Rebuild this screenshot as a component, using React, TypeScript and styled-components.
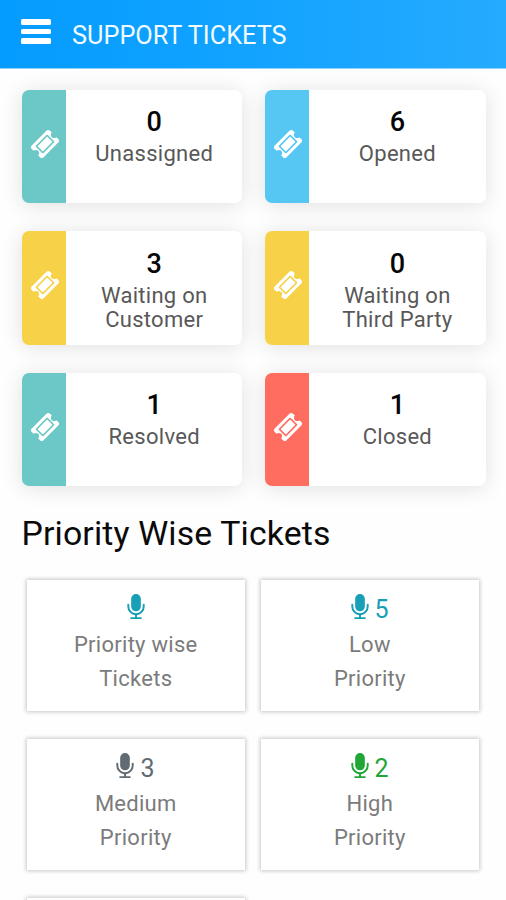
import React from "react";
import styled, { createGlobalStyle } from "styled-components";

const GlobalStyle = createGlobalStyle`
  * { box-sizing: border-box; }
  html, body { margin: 0; padding: 0; background: #fff; overflow: hidden; }
  body { font-family: Roboto, "Liberation Sans", sans-serif; }
`;

const Screen = styled.div`
  width: 506px;
  height: 900px;
  overflow: hidden;
  background: #fefefe;
`;

const Header = styled.header`
  display: flex;
  align-items: flex-start;
  height: 68px;
  padding: 19px 21px 0;
  background: linear-gradient(90deg, #049cff 0%, #13a3ff 50%, #25abff 100%);
  box-shadow: 0 1px 0 #8fd0fa;
`;

const MenuButton = styled.button`
  display: flex;
  flex-direction: column;
  gap: 4px;
  width: 30px;
  margin: 0;
  padding: 0;
  border: 0;
  background: none;
`;

const MenuBar = styled.span`
  height: 5.6px;
  border-radius: 1.5px;
  background: #fff;
`;

const Title = styled.h1`
  margin: 2px 0 0 21px;
  color: #f2fbff;
  font-size: 25.3px;
  line-height: 30px;
  font-weight: 400;
  letter-spacing: 0;
`;

const StatusGrid = styled.section`
  display: grid;
  grid-template-columns: 220.4px 220.4px;
  grid-auto-rows: 113.2px;
  gap: 28.3px 22.8px;
  padding: 22px 0 0 22px;
`;

const StatusCard = styled.article`
  display: flex;
  overflow: hidden;
  border-radius: 7px;
  background: #fff;
  box-shadow: 0 2px 21px rgba(0, 0, 0, 0.12);
`;

const StatusStrip = styled.div<{ $color: string }>`
  display: flex;
  align-items: center;
  justify-content: center;
  width: 44px;
  padding-left: 1px;
  padding-bottom: 6px;
  background: ${({ $color }) => $color};
`;

const StatusBody = styled.div`
  flex: 1;
  padding-top: 16.4px;
  text-align: center;
`;

const StatusCount = styled.div`
  color: #050505;
  font-size: 27px;
  line-height: 32px;
  font-weight: 500;
`;

const StatusLabel = styled.div`
  margin-top: 4px;
  color: #585858;
  font-size: 22px;
  line-height: 24.6px;
  letter-spacing: 0.28px;
  white-space: pre-line;
`;

const SectionTitle = styled.h2`
  margin: 27px 0 0 21.5px;
  color: #0a0a0a;
  font-size: 33.8px;
  line-height: 42px;
  font-weight: 400;
  letter-spacing: 0.15px;
`;

const PriorityGrid = styled.section`
  display: grid;
  grid-template-columns: 218.5px 218.5px;
  grid-auto-rows: 131.6px;
  gap: 27.4px 15.6px;
  padding: 24.7px 0 0 26.5px;
`;

const PriorityCard = styled.article`
  padding-top: 12px;
  background: #fff;
  box-shadow: 0 0 4px 1px rgba(0, 0, 0, 0.22);
  text-align: center;
`;

const PriorityHead = styled.div<{ $color: string; $shifted: boolean }>`
  display: flex;
  align-items: center;
  justify-content: center;
  gap: 1px;
  height: 35px;
  padding-right: ${({ $shifted }) => ($shifted ? "5.5px" : "0")};
  color: ${({ $color }) => $color};
  font-size: 25px;
`;

const PriorityLabel = styled.div`
  padding-top: 1.4px;
  color: #7b7b7b;
  font-size: 22px;
  line-height: 33.8px;
  letter-spacing: 0.28px;
  white-space: pre-line;
`;

const TicketSvg = styled.svg`
  flex: none;
  width: 30px;
  height: 30px;
  fill: #fff;
`;

const MicSvg = styled.svg`
  flex: none;
  width: 28px;
  height: 27px;
  margin-top: -3px;
  fill: currentColor;
`;

const TicketIcon = () => (
  <TicketSvg viewBox="0 0 1792 1792" aria-hidden="true">
    <path d="M1024 452l316 316-572 572-316-316zM813 1431l618-618q19-19 19-45t-19-45l-362-362q-18-18-45-18t-45 18l-618 618q-19 19-19 45t19 45l362 362q18 18 45 18t45-18zM1702 794l-907 908q-37 37-90.5 37t-90.5-37l-126-126q56-56 56-136t-56-136-136-56-136 56l-125-126q-37-37-37-90.5t37-90.5l907-906q37-37 90.5-37t90.5 37l125 125q-56 56-56 136t56 136 136 56 136-56l126 125q37 37 37 90.5t-37 90.5z" />
  </TicketSvg>
);

const MicIcon = () => (
  <MicSvg viewBox="0 0 1792 1792" aria-hidden="true">
    <path d="M1472 704v128q0 221-147.500 384.500t-364.500 187.500v132h256q26 0 45 19t19 45-19 45-45 19h-640q-26 0-45-19t-19-45 19-45 45-19h256v-132q-217-24-364.500-187.500t-147.500-384.500v-128q0-26 19-45t45-19 45 19 19 45v128q0 185 131.500 316.500t316.500 131.500 316.500-131.500 131.500-316.500v-128q0-26 19-45t45-19 45 19 19 45zm-256-384v512q0 132-94 226t-226 94-226-94-94-226v-512q0-132 94-226t226-94 226 94 94 226z" />
  </MicSvg>
);

const statuses = [
  { count: 0, label: "Unassigned", color: "#6bc8c7" },
  { count: 6, label: "Opened", color: "#56c7f2" },
  { count: 3, label: "Waiting on\nCustomer", color: "#f7d248" },
  { count: 0, label: "Waiting on\nThird Party", color: "#f7d248" },
  { count: 1, label: "Resolved", color: "#6bc8c7" },
  { count: 1, label: "Closed", color: "#ff6d60" },
];

const priorities = [
  { count: "", label: "Priority wise\nTickets", color: "#189fb6" },
  { count: "5", label: "Low\nPriority", color: "#189fb6" },
  { count: "3", label: "Medium\nPriority", color: "#626a72" },
  { count: "2", label: "High\nPriority", color: "#1fa637" },
];

export default function App() {
  return (
    <Screen>
      <GlobalStyle />
      <Header>
        <MenuButton aria-label="Menu">
          <MenuBar />
          <MenuBar />
          <MenuBar />
        </MenuButton>
        <Title>SUPPORT TICKETS</Title>
      </Header>
      <StatusGrid>
        {statuses.map((s) => (
          <StatusCard key={s.label}>
            <StatusStrip $color={s.color}>
              <TicketIcon />
            </StatusStrip>
            <StatusBody>
              <StatusCount>{s.count}</StatusCount>
              <StatusLabel>{s.label}</StatusLabel>
            </StatusBody>
          </StatusCard>
        ))}
      </StatusGrid>
      <SectionTitle>Priority Wise Tickets</SectionTitle>
      <PriorityGrid>
        {priorities.map((p) => (
          <PriorityCard key={p.label}>
            <PriorityHead $color={p.color} $shifted={p.count !== ""}>
              <MicIcon />
              {p.count && <span>{p.count}</span>}
            </PriorityHead>
            <PriorityLabel>{p.label}</PriorityLabel>
          </PriorityCard>
        ))}
        <PriorityCard />
      </PriorityGrid>
    </Screen>
  );
}
